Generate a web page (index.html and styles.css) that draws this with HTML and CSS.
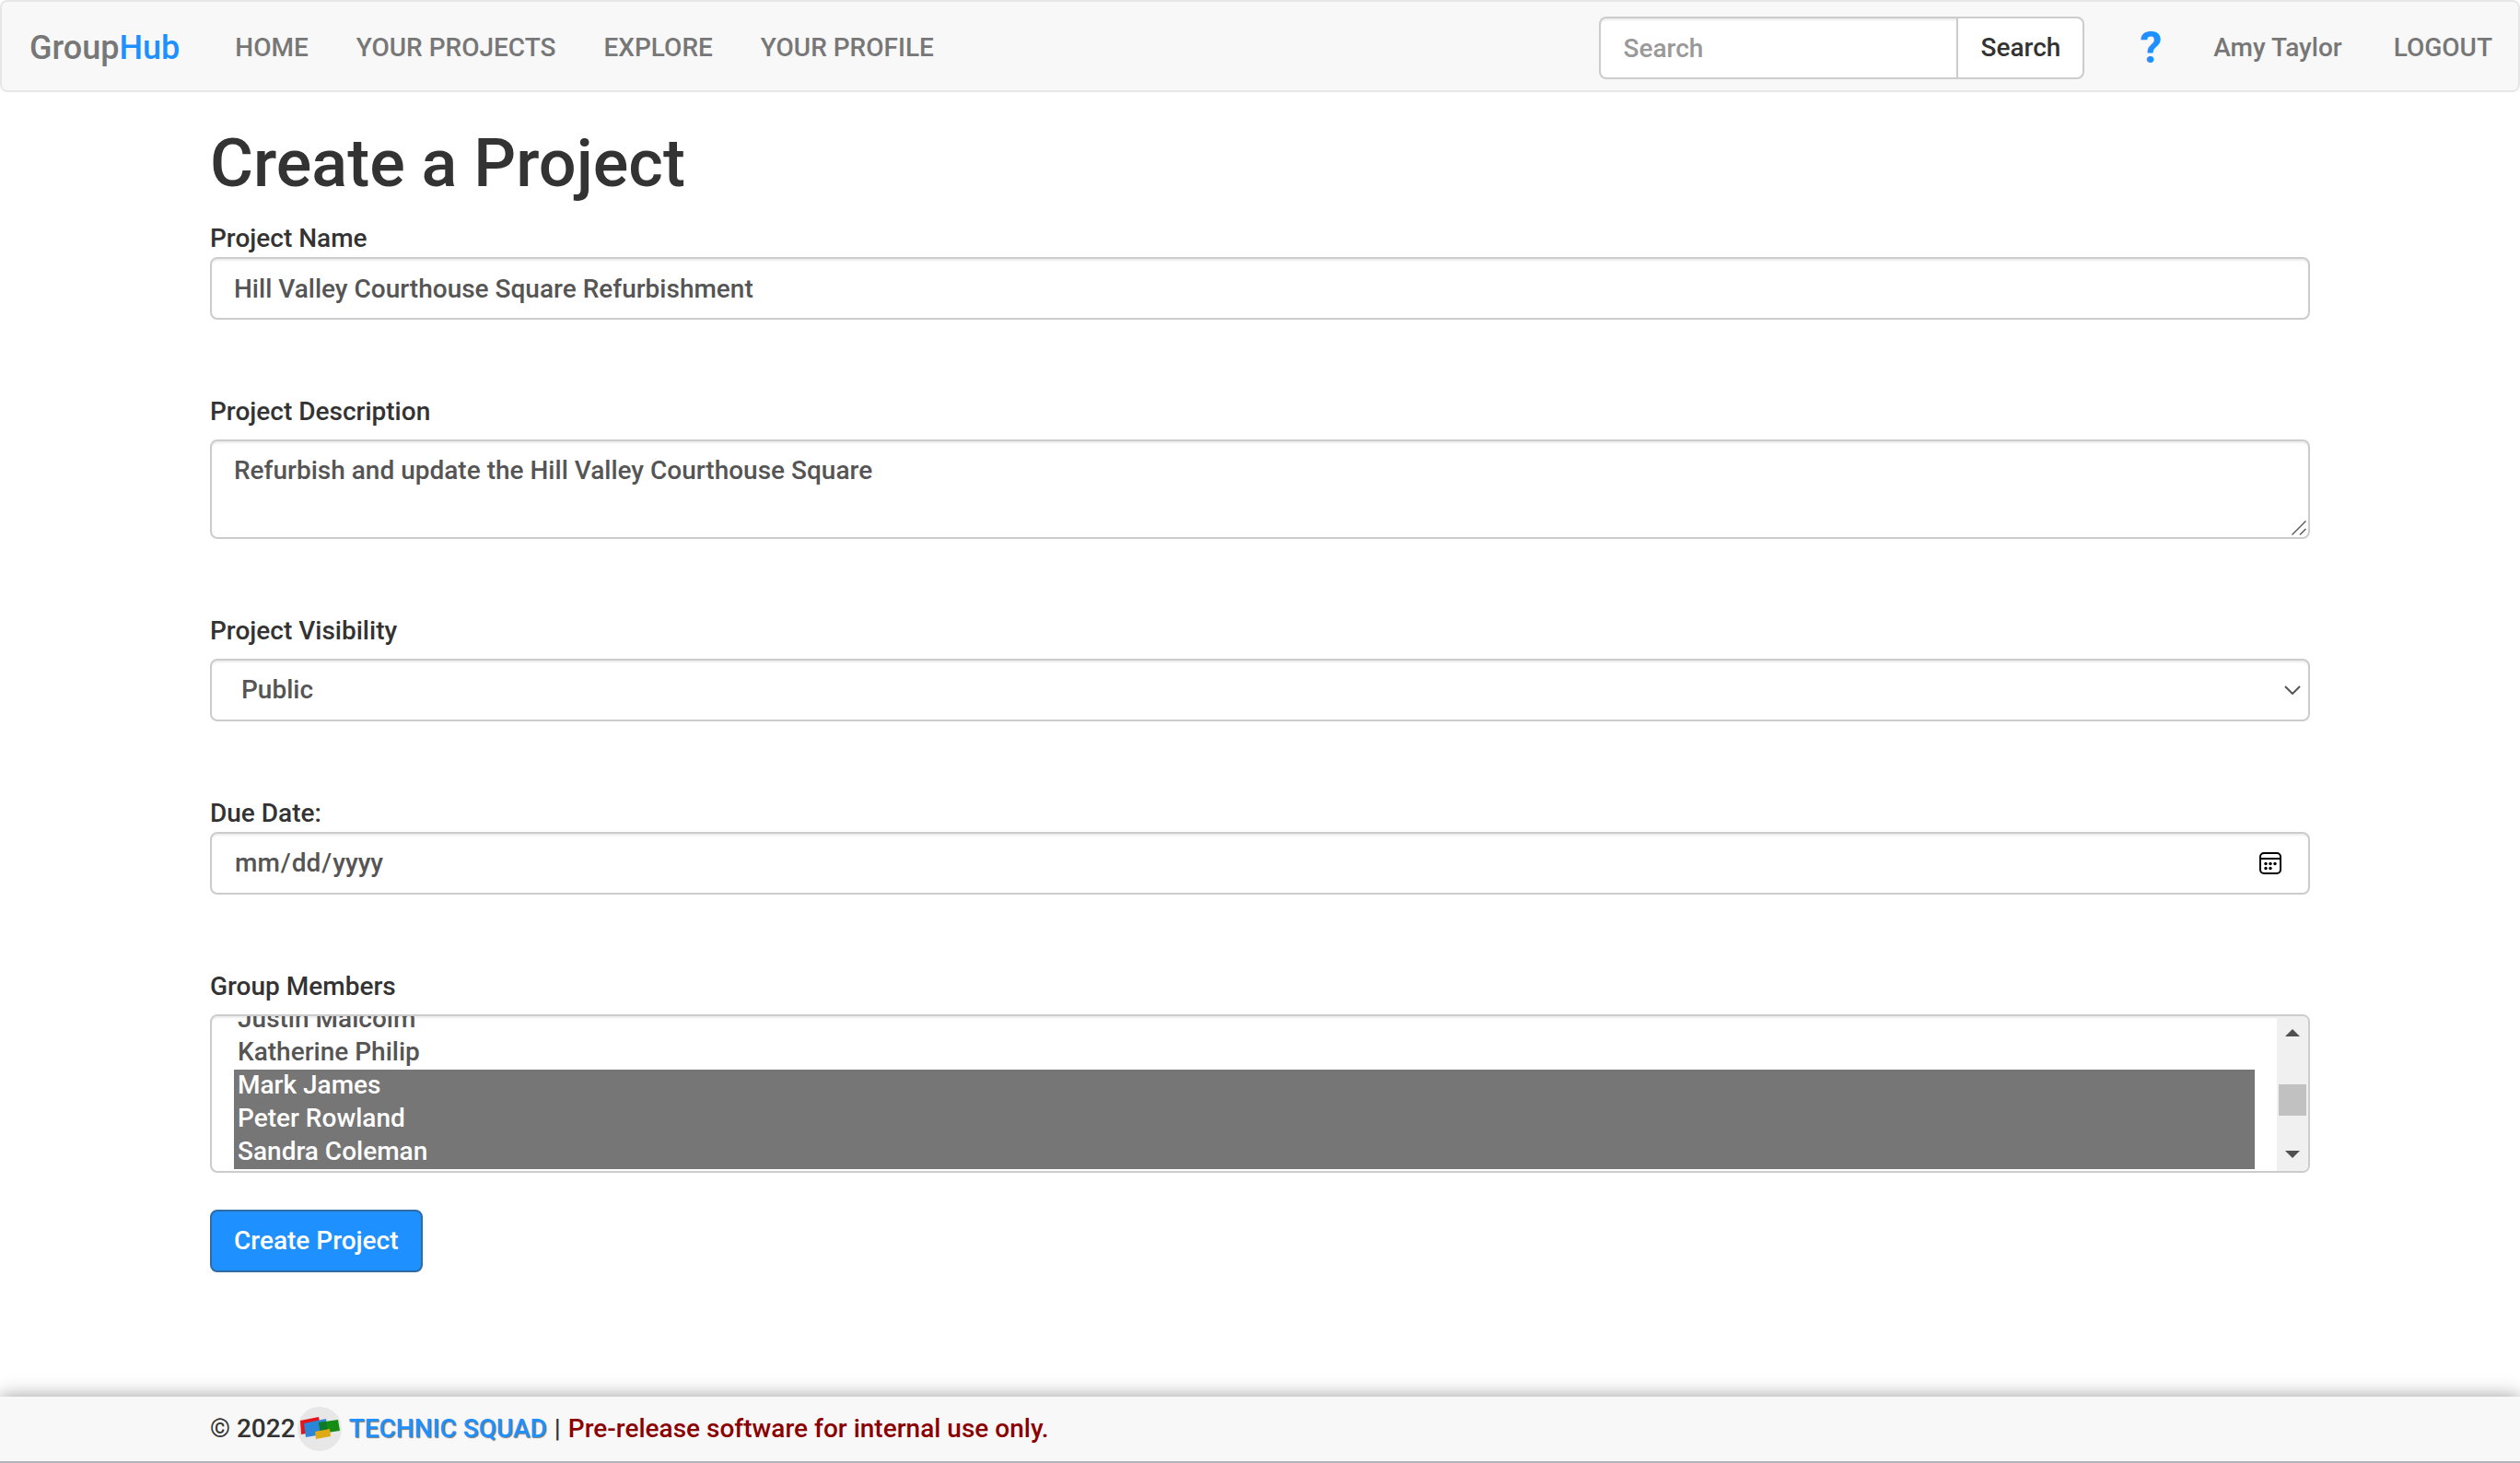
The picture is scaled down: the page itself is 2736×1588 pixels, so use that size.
FILE: index.html
```html
<!DOCTYPE html>
<html lang="en-US">
<head>
<meta charset="utf-8">
<meta name="viewport" content="width=device-width, initial-scale=1">
<title>GroupHub - Create a Project</title>
<link rel="stylesheet" href="styles.css">
</head>
<body>
<header class="navbar">
  <a class="brand" href="#">Group<span class="brand-accent">Hub</span></a>
  <nav class="nav-links" aria-label="Main">
    <a href="#">HOME</a>
    <a href="#">YOUR PROJECTS</a>
    <a href="#">EXPLORE</a>
    <a href="#">YOUR PROFILE</a>
  </nav>
  <form class="search" role="search">
    <input class="search-input" type="text" placeholder="Search" aria-label="Search">
    <button class="search-button" type="button">Search</button>
  </form>
  <nav class="nav-user" aria-label="Account">
    <a class="help" href="#">?</a>
    <a href="#">Amy Taylor</a>
    <a href="#">LOGOUT</a>
  </nav>
</header>

<main class="container">
  <h1 class="title">Create a Project</h1>
  <form class="project-form">
    <div class="field">
      <label for="name">Project Name</label>
      <input class="control" id="name" type="text" value="Hill Valley Courthouse Square Refurbishment">
    </div>
    <div class="field field-spaced">
      <label for="description">Project Description</label>
      <div class="textarea-wrap">
        <textarea class="control textarea" id="description" spellcheck="false">Refurbish and update the Hill Valley Courthouse Square</textarea>
        <svg class="grip" viewBox="0 0 16 16" aria-hidden="true"><path d="M.5 15.5 15.5.5M9 15.500 15.500 9" fill="none" stroke="#555" stroke-width="1.400"/></svg>
      </div>
    </div>
    <div class="field field-spaced">
      <label for="visibility">Project Visibility</label>
      <select class="control select" id="visibility"><option>Public</option></select>
    </div>
    <div class="field">
      <label for="due">Due Date:</label>
      <input class="control date" id="due" type="date">
    </div>
    <div class="field field-spaced field-last">
      <label for="members">Group Members</label>
      <div class="listbox">
        <select class="members" id="members" multiple size="4">
          <option>Justin Malcolm</option>
          <option>Katherine Philip</option>
          <option selected>Mark James</option>
          <option selected>Peter Rowland</option>
          <option selected>Sandra Coleman</option>
        </select>
        <div class="scrollbar" aria-hidden="true">
          <svg class="arrow" viewBox="0 0 16 8"><path d="M0 8 8 0l8 8z"/></svg>
          <span class="thumb"></span>
          <svg class="arrow" viewBox="0 0 16 8"><path d="M0 0h16L8 8z"/></svg>
        </div>
      </div>
    </div>
    <button class="submit" type="button">Create Project</button>
  </form>
</main>

<footer class="footer">
  <span>© 2022</span>
  <a class="team" href="#">
    <svg class="logo" viewBox="0 0 48 48" aria-hidden="true">
      <circle cx="24" cy="24" r="24" fill="#e7e7e7"/>
      <path d="M3 15 23 11 26 26 4 30z" fill="#e3151b"/>
      <path d="M7 18 31 13 33 29 9 33z" fill="#2b86d9"/>
      <path d="M23 17 44 14 46 26 25 29z" fill="#168c16"/>
      <path d="M23 17 31 16 33 28 25 29z" fill="#0d7a2c"/>
      <path d="M19 27 35 24 36 32 20 35z" fill="#dfaa14"/>
    </svg>
    <span>TECHNIC SQUAD</span>
  </a>
  <span class="divider">|</span>
  <span class="notice">Pre-release software for internal use only.</span>
</footer>
<script src="app.js"></script>
</body>
</html>
```
FILE: styles.css
```css
* { box-sizing: border-box; }

body {
  margin: 0;
  min-height: 100vh;
  display: flex;
  flex-direction: column;
  background: #fff;
  color: #333;
  font: 500 28px/40px Roboto, "Liberation Sans", sans-serif;
}

a { color: inherit; text-decoration: none; }
input, select, textarea, button { font: inherit; color: inherit; margin: 0; }

.navbar {
  display: flex;
  align-items: center;
  height: 100px;
  padding: 4px 28px 0 30px;
  background: #f8f8f8;
  border: 2px solid #e7e7e7;
  border-radius: 8px;
  color: #777;
}
.brand { font-size: 36px; }
.brand-accent { color: #1e90ff; }
.nav-links { display: flex; gap: 52px; margin-left: 60px; }
.nav-user { display: flex; align-items: center; gap: 56px; margin-left: 60px; }
.help { color: #1e90ff; font-size: 48px; font-weight: 700; }

.search { display: flex; margin-left: auto; }
.search-input, .search-button {
  height: 68px;
  padding: 0 24px;
  background: #fff;
  border: 2px solid #ccc;
}
.search-input {
  width: 388px;
  border-right: 0;
  border-radius: 8px 0 0 8px;
  box-shadow: inset 0 2px 2px rgba(0, 0, 0, .075);
}
.search-input::placeholder { color: #999; opacity: 1; }
.search-button { color: #333; border-radius: 0 8px 8px 0; }

.container { padding: 38px calc(100% / 12) 80px; }
.title { margin: 0 0 21px; font-size: 72px; line-height: 80px; font-weight: 500; }

.field { display: flex; flex-direction: column; margin-bottom: 80px; }
.field-spaced { gap: 10px; }
.field-last { margin-bottom: 40px; }

.control {
  display: block;
  width: 100%;
  height: 68px;
  padding: 12px 24px;
  background: #fff;
  border: 2px solid #ccc;
  border-radius: 8px;
  box-shadow: inset 0 2px 2px rgba(0, 0, 0, .075);
  color: #555;
}
.textarea-wrap { position: relative; }
.textarea { height: 108px; resize: none; }
.grip { position: absolute; right: 4px; bottom: 4px; width: 16px; height: 16px; }

.select {
  appearance: none;
  padding: 0 32px;
  background: #fff url("data:image/svg+xml,%3Csvg xmlns='http://www.w3.org/2000/svg' viewBox='0 0 18 10'%3E%3Cpath d='M1 1l8 8 8-8' fill='none' stroke='%23555' stroke-width='2'/%3E%3C/svg%3E") right 8px center / 18px 10px no-repeat;
}
.date { padding-right: 28px; }
.date::-webkit-calendar-picker-indicator {
  width: 26px;
  height: 26px;
  padding: 0;
  background: url("data:image/svg+xml,%3Csvg xmlns='http://www.w3.org/2000/svg' viewBox='0 0 26 26'%3E%3Crect x='2' y='2' width='22' height='22' rx='4' fill='none' stroke='%23000' stroke-width='2'/%3E%3Cpath d='M2 8h22' stroke='%23000' stroke-width='2'/%3E%3Cg fill='%23000'%3E%3Ccircle cx='8' cy='13.500' r='1.700'/%3E%3Ccircle cx='13' cy='13.500' r='1.700'/%3E%3Ccircle cx='18' cy='13.500' r='1.700'/%3E%3Ccircle cx='8' cy='18.500' r='1.700'/%3E%3Ccircle cx='13' cy='18.500' r='1.700'/%3E%3C/g%3E%3C/svg%3E") center / 26px 26px no-repeat;
}

.listbox {
  display: flex;
  height: 172px;
  border: 2px solid #ccc;
  border-radius: 8px;
  overflow: hidden;
  box-shadow: inset 0 2px 2px rgba(0, 0, 0, .075);
}
.members {
  flex: 1;
  height: 168px;
  padding: 12px 24px;
  border: 0;
  background: transparent;
  color: #555;
  scrollbar-width: none;
}
.members option { height: 36px; padding: 0 4px; line-height: 36px; font-weight: 500; }
.members option:checked {
  background-image: linear-gradient(#767676, #767676);
  -webkit-text-fill-color: #fff;
}
.scrollbar {
  display: flex;
  flex-direction: column;
  align-items: center;
  justify-content: space-between;
  width: 34px;
  padding: 14px 2px;
  background: #f0f0f0;
}
.arrow { width: 16px; height: 8px; fill: #505050; }
.thumb { width: 30px; height: 34px; margin-top: 14px; background: #c1c1c1; }

.submit {
  height: 68px;
  padding: 0 24px;
  background: #1e90ff;
  border: 2px solid #2e6da4;
  border-radius: 8px;
  color: #fff;
}

.footer {
  display: flex;
  align-items: center;
  height: 72px;
  margin-top: auto;
  padding: 0 calc(100% / 12);
  background: #f8f8f8;
  border-bottom: 2px solid #b0b3ba;
  box-shadow: 0 0 20px rgba(0, 0, 0, .4);
}
.logo { width: 48px; height: 48px; }
.team {
  display: flex;
  align-items: center;
  gap: 8px;
  margin-left: 2px;
  color: #1e90ff;
  text-shadow: 1px 1px 1px #777;
}
.divider { margin: 0 8px; }
.notice { color: #8b0000; }
```
FILE: app.js
```js
// Bring the selected members into view.
const members = document.getElementById("members");
members.scrollTop = 26;
requestAnimationFrame(() => { members.scrollTop = 26; });
```
